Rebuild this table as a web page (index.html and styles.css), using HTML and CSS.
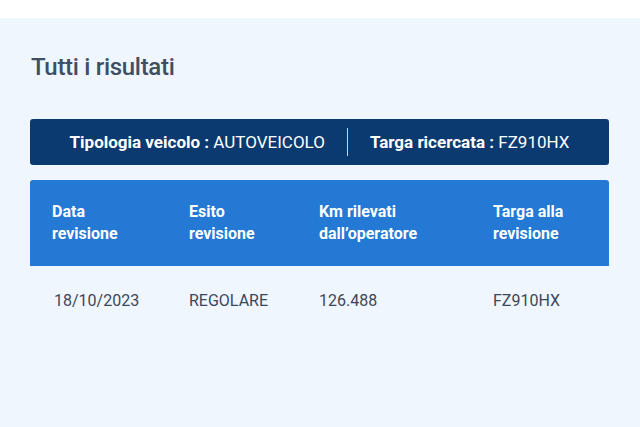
FILE: index.html
```html
<!DOCTYPE html>
<html lang="it">
<head>
<meta charset="utf-8">
<link rel="stylesheet" href="styles.css">
</head>
<body>
<div class="topband"></div>
<main class="panel">
  <h2 class="title">Tutti i risultati</h2>
  <div class="searchbar">
    <span class="item"><b>Tipologia veicolo :</b> AUTOVEICOLO</span>
    <span class="sep"></span>
    <span class="item"><b>Targa ricercata :</b> FZ910HX</span>
  </div>
  <div class="table">
    <div class="thead">
      <div class="cell">Data<br>revisione</div>
      <div class="cell">Esito<br>revisione</div>
      <div class="cell">Km rilevati<br>dall’operatore</div>
      <div class="cell">Targa alla<br>revisione</div>
    </div>
    <div class="trow">
      <div class="cell">18/10/2023</div>
      <div class="cell">REGOLARE</div>
      <div class="cell">126.488</div>
      <div class="cell">FZ910HX</div>
    </div>
  </div>
</main>
</body>
</html>
```
FILE: styles.css
```css
* { box-sizing: border-box; }
html, body { margin: 0; padding: 0; }
body {
  width: 640px;
  height: 427px;
  overflow: hidden;
  background: #eff6fd;
  font-family: Roboto, "Open Sans", sans-serif;
}
.topband { height: 18px; background: #ffffff; }
.panel { padding: 0 31px 0 30px; }
.title {
  margin: 34px 0 0 1px;
  font-size: 24px;
  font-weight: 500;
  color: #3f4f63;
  line-height: 30px;
  letter-spacing: -0.3px;
}
.searchbar {
  margin-top: 37px;
  height: 46px;
  background: #0a3a6f;
  border-radius: 3px;
  display: flex;
  align-items: center;
  justify-content: center;
  gap: 22px;
  color: #ffffff;
  font-size: 17px;
}
.searchbar b { font-weight: 700; }
.sep { width: 1px; height: 28px; background: #c6d4e4; }
.table { margin-top: 15px; }
.thead, .trow {
  display: grid;
  grid-template-columns: 137px 130px 174px 1fr;
  padding-left: 22px;
}
.thead {
  background: #2379d4;
  border-radius: 3px 3px 0 0;
  height: 86px;
  align-items: center;
  color: #ffffff;
  font-weight: 700;
  font-size: 16px;
  line-height: 22px;
}
.trow {
  padding-top: 24px;
  color: #3b4858;
  font-size: 16px;
  line-height: 22px;
}
.trow .cell:first-child { padding-left: 2px; }
```
